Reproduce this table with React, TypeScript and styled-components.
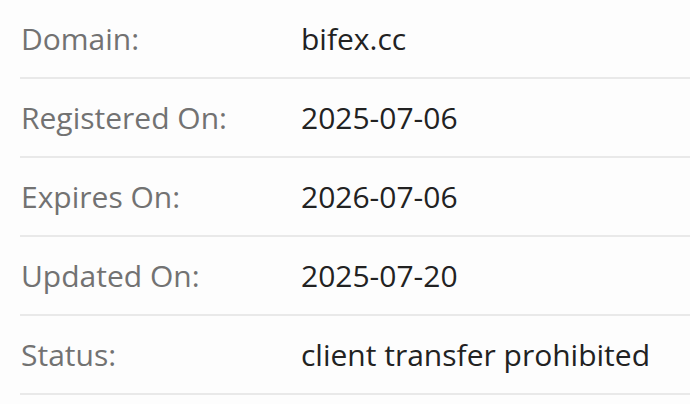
import * as React from 'react';
import styled, { createGlobalStyle } from 'styled-components';

const GlobalStyle = createGlobalStyle`
  html, body {
    margin: 0;
    padding: 0;
    background: #fdfdfd;
  }
  body {
    font-family: "Open Sans", "Liberation Sans", sans-serif;
  }
`;

interface Entry {
  label: string;
  value: string;
}

const entries: Entry[] = [
  { label: 'Domain:', value: 'bifex.cc' },
  { label: 'Registered On:', value: '2025-07-06' },
  { label: 'Expires On:', value: '2026-07-06' },
  { label: 'Updated On:', value: '2025-07-20' },
  { label: 'Status:', value: 'client transfer prohibited' },
];

const App = () => {
  return (
    <>
      <GlobalStyle />
      <Table>
        {entries.map((e) => (
          <Row key={e.label}>
            <Label>{e.label}</Label>
            <Value>{e.value}</Value>
          </Row>
        ))}
      </Table>
    </>
  );
};

const Table = styled.div`
  margin-left: 20px;
  display: flex;
  flex-direction: column;
`;

const Row = styled.div`
  display: grid;
  grid-template-columns: 281px 1fr;
  align-items: center;
  height: 77px;
  border-bottom: 2px solid #e9e9e9;
`;

const Label = styled.div`
  padding-left: 1px;
  font-size: 30px;
  color: #727272;
`;

const Value = styled.div`
  font-size: 30px;
  color: #222222;
`;

export default App;
